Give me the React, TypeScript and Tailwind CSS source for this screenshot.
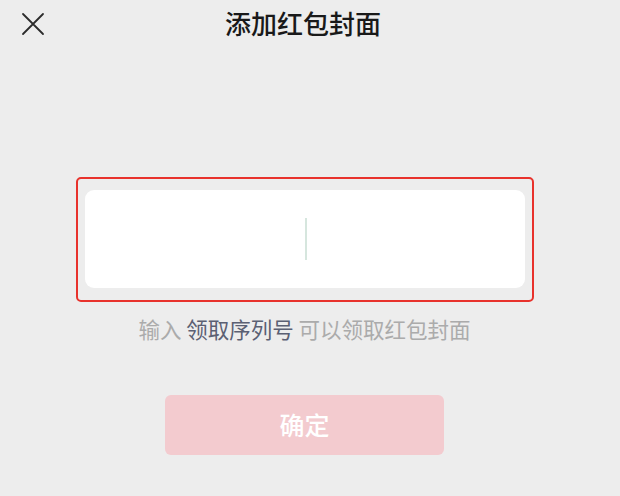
import React from "react";

const font = { fontFamily: '"Noto Sans CJK SC", "Noto Sans", sans-serif' };

function CloseIcon() {
  return (
    <svg width="24" height="24" viewBox="0 0 24 24" fill="none">
      <path d="M2 2 L22 22 M22 2 L2 22" stroke="#2b2b2b" strokeWidth="1.8" strokeLinecap="round" />
    </svg>
  );
}

export default function App() {
  return (
    <div className="w-[620px] h-[496px] bg-[#ededed] overflow-hidden" style={font}>
      <div className="relative h-[50px] flex items-center justify-center">
        <div className="absolute left-[21px] top-[12px]">
          <CloseIcon />
        </div>
        <h1 className="text-[26px] font-medium text-[#191919] leading-none pr-[14px] pb-[4px]">
          添加红包封面
        </h1>
      </div>

      <div className="mt-[127px] ml-[76px] w-[458px] h-[125px] border-[2.5px] border-[#e8322c] rounded-[5px] px-[7px] pt-[11px] pb-[12px]">
        <div className="h-full bg-white rounded-[9px] flex items-center justify-center">
          <div className="w-[2px] h-[42px] bg-[#d6e6de] ml-[2px]" />
        </div>
      </div>

      <p className="mt-[14px] text-center text-[21.5px] leading-[26px] text-[#ababab] pr-[11px]">
        输入 <span className="text-[#5b6073]">领取序列号</span> 可以领取红包封面
      </p>

      <div className="mt-[53px] flex justify-center pr-[11px]">
        <button className="w-[279px] h-[60px] rounded-[6px] bg-[#f3cbcf] text-white text-[25px] font-medium">
          确定
        </button>
      </div>
    </div>
  );
}
